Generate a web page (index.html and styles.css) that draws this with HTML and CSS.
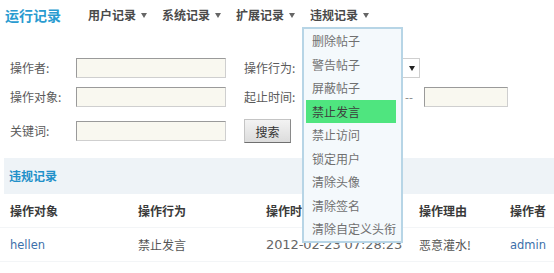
FILE: index.html
```html
<!DOCTYPE html>
<html lang="zh-CN">
<head>
<meta charset="utf-8">
<title>运行记录</title>
<link rel="stylesheet" href="styles.css">
</head>
<body>
<div class="page">
  <header class="topbar">
    <span class="brand">运行记录</span>
    <nav class="menu">
      <span class="menu-item">用户记录<i class="caret"></i></span>
      <span class="menu-item">系统记录<i class="caret"></i></span>
      <span class="menu-item">扩展记录<i class="caret"></i></span>
      <span class="menu-item open">违规记录<i class="caret"></i>
        <ul class="dropdown">
          <li>删除帖子</li>
          <li>警告帖子</li>
          <li>屏蔽帖子</li>
          <li class="active">禁止发言</li>
          <li>禁止访问</li>
          <li>锁定用户</li>
          <li>清除头像</li>
          <li>清除签名</li>
          <li>清除自定义头衔</li>
        </ul>
      </span>
    </nav>
  </header>

  <form class="filters">
    <label class="lbl">操作者:</label>
    <div class="cell"><input class="txt" type="text"></div>
    <label class="lbl">操作行为:</label>
    <div class="cell"><span class="select"><i class="caret dark"></i></span></div>

    <label class="lbl">操作对象:</label>
    <div class="cell"><input class="txt" type="text"></div>
    <label class="lbl">起止时间:</label>
    <div class="cell dates"><input class="txt date1" type="text"><span class="dash">--</span><input class="txt date2" type="text"></div>

    <label class="lbl r3">关键词:</label>
    <div class="cell r3"><input class="txt" type="text"></div>
    <div class="cell r3 span2"><button class="btn" type="button">搜索</button></div>
  </form>

  <section class="records">
    <h2 class="band">违规记录</h2>
    <div class="grid head">
      <span>操作对象</span><span>操作行为</span><span>操作时间</span><span>操作理由</span><span>操作者</span>
    </div>
    <div class="grid row">
      <span class="link">hellen</span><span class="muted">禁止发言</span><span class="date">2012-02-23 07:28:23</span><span class="muted">恶意灌水!</span><span class="link">admin</span>
    </div>
  </section>
</div>
</body>
</html>
```

FILE: styles.css
```css
* { box-sizing: border-box; }
html, body { margin: 0; padding: 0; background: #fff; }
body {
  font-family: "DejaVu Sans", "Noto Sans CJK SC", sans-serif;
  font-size: 12px;
  color: #555;
}
.page { width: 554px; height: 273px; overflow: hidden; }

.topbar {
  display: flex;
  height: 30px;
  padding-left: 5px;
  align-items: stretch;
}
.brand {
  font-family: "Noto Sans CJK SC", sans-serif;
  font-size: 14px;
  font-weight: bold;
  color: #2a9bd0;
  line-height: 30px;
  margin-right: 27px;
}
.menu { display: flex; gap: 14px; }
.menu-item {
  position: relative;
  font-family: "Noto Sans CJK SC", sans-serif;
  font-weight: bold;
  font-size: 12px;
  color: #4a4a4a;
  line-height: 30px;
  display: flex;
  align-items: center;
}
.caret {
  display: inline-block;
  width: 0; height: 0;
  border-left: 3px solid transparent;
  border-right: 3px solid transparent;
  border-top: 5px solid #666;
  margin-left: 5px;
  margin-right: 1px;
}
.caret.dark { border-top-color: #222; margin: 0; }

.dropdown {
  position: absolute;
  top: 27px;
  left: -8px;
  width: 101px;
  margin: 0;
  padding: 0;
  list-style: none;
  background: #f4f9fc;
  border: 2px solid #b7d5e6;
  z-index: 10;
  font-weight: normal;
}
.dropdown li {
  height: 23.5px;
  line-height: 23.5px;
  padding-left: 6px;
  margin: 0 5px 0 2px;
  color: #707070;
  white-space: nowrap;
}
.dropdown li.active { background: #4fe57f; color: #3d3d3d; }

.filters {
  display: grid;
  grid-template-columns: 66px 168px 66px 1fr;
  grid-template-rows: 20px 20px 27px;
  row-gap: 9px;
  align-items: center;
  padding-left: 10px;
  margin-top: 28px;
}
.lbl { font-family: "Noto Sans CJK SC", sans-serif; color: #5a5a5a; line-height: 20px; }
.cell { display: flex; align-items: center; }
.r3 { margin-top: 3px; }
.span2 { grid-column: 3 / span 2; }
.txt {
  width: 150px;
  height: 20px;
  margin: 0;
  padding: 0;
  background: #f9f8f0;
  border: 1px solid;
  border-color: #9a9a9a #cfcfcf #cfcfcf #9a9a9a;
}
.select {
  width: 110px;
  height: 20px;
  background: #fff;
  border: 1px solid #cfcfcf;
  display: flex;
  align-items: center;
  justify-content: flex-end;
  padding-right: 4px;
}
.date1 { width: 90px; }
.date2 { width: 84px; }
.dash { color: #888; margin: 0 11px 0 5px; font-size: 11px; }
.btn {
  width: 47px;
  height: 24px;
  margin: 0;
  padding: 0;
  font-family: "Noto Sans CJK SC", sans-serif;
  font-size: 12px;
  color: #333;
  background: linear-gradient(#f3f3f3, #dcdcdc);
  border: 1px solid;
  border-color: #c4c4c4 #8a8a8a #6f6f6f #c4c4c4;
}

.records { margin-top: 15px; }
.band {
  margin: 0 0 0 4px;
  height: 36px;
  line-height: 36px;
  padding-left: 5px;
  background: #eef3f7;
  font-family: "Noto Sans CJK SC", sans-serif;
  font-size: 12px;
  font-weight: bold;
  color: #2190c9;
}
.grid {
  display: grid;
  grid-template-columns: 128px 128px 153px 91px 1fr;
  padding-left: 10px;
  height: 34px;
  align-items: center;
  border-bottom: 1px solid #f3f5f7;
}
.head {
  font-family: "Noto Sans CJK SC", sans-serif;
  font-weight: bold;
  color: #3a3a3a;
}
.row span { font-family: "Noto Sans CJK SC", sans-serif; }
.row .link { font-family: "DejaVu Sans", sans-serif; font-size: 11.5px; color: #3c70aa; }
.row .muted { color: #555; }
.row .date { font-family: "DejaVu Sans", sans-serif; font-size: 13px; color: #666; letter-spacing: -0.1px; }
```
